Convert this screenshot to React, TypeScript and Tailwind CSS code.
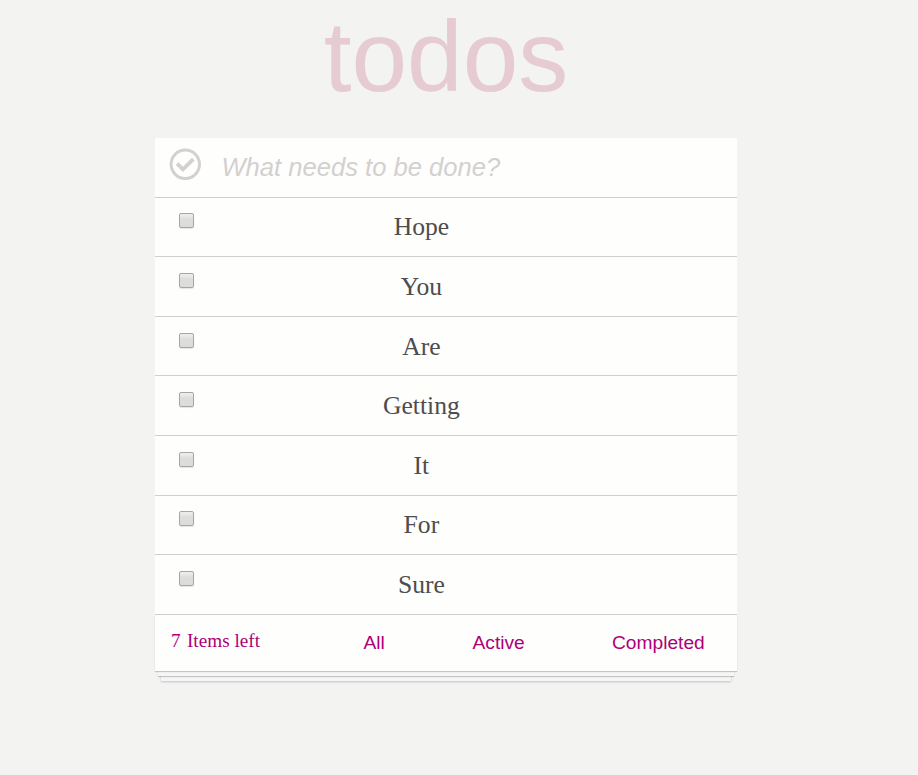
const items = [
  { text: "Hope", box: "h-[59px]" },
  { text: "You", box: "h-[60px] pt-px" },
  { text: "Are", box: "h-[59px] pt-px" },
  { text: "Getting", box: "h-[60px] pt-px" },
  { text: "It", box: "h-[60px] pt-px" },
  { text: "For", box: "h-[59px]" },
  { text: "Sure", box: "h-[60px] pt-px" },
];

export default function App() {
  return (
    <div className="h-[775px] bg-[#f3f3f2] font-['Liberation_Sans',sans-serif]">
      <div className="ml-[155px] w-[582px]">
        <h1 className="h-[138px] text-center text-[100px] leading-[112px] text-[#e6cbd2]">todos</h1>
        <div className="flex h-[60px] items-start border-b border-[#cfcfcf] bg-[#fefefd]">
          <svg className="ml-[14px] mt-[10px] h-8 w-8" viewBox="0 0 32 32" fill="none" stroke="#d3d0cf" strokeWidth="3">
            <circle cx="16.3" cy="16.3" r="14.2" />
            <path d="M8 15.6l6 5.8L24.3 11.2" strokeWidth="3.8" />
          </svg>
          <span className="ml-[20.4px] mt-[11px] text-[25.6px] leading-9 italic text-[#d3d0cf]">What needs to be done?</span>
        </div>
        {items.map((it) => (
          <div key={it.text} className={`flex items-start border-b border-[#cfcfcf] bg-[#fefefd] ${it.box}`}>
            <span className="ml-6 mt-[15px] h-[15px] w-[15px] rounded-[2px] border border-[#a6a6a6] bg-linear-to-b from-[#ececec] from-10% via-[#dddddd] via-40% to-[#dddcdb] shadow-[0_1px_1px_rgba(0,0,0,0.1)]" />
            <span className="ml-[27.4px] mt-[11px] w-[400px] text-center font-['Liberation_Serif',serif] text-[25.6px] leading-9 text-[#4d4d4d]">{it.text}</span>
          </div>
        ))}
        <div className="flex h-[56px] items-start bg-[#fefefd] text-[19.2px] leading-6 text-[#af0078] shadow-[0_1px_1px_rgba(0,0,0,0.2),0_8px_0_-3px_#f6f6f6,0_9px_1px_-3px_rgba(0,0,0,0.2),0_16px_0_-6px_#f6f6f6,0_17px_2px_-6px_rgba(0,0,0,0.2)]">
          <span className="ml-4 mt-[14px] flex w-[192.5px] gap-[6.4px] font-['Liberation_Serif',serif]">
            <span>7</span>
            <span>Items left</span>
          </span>
          <span className="mt-4 w-[109px]">All</span>
          <span className="mt-4 w-[139.5px]">Active</span>
          <span className="mt-4">Completed</span>
        </div>
      </div>
    </div>
  );
}
